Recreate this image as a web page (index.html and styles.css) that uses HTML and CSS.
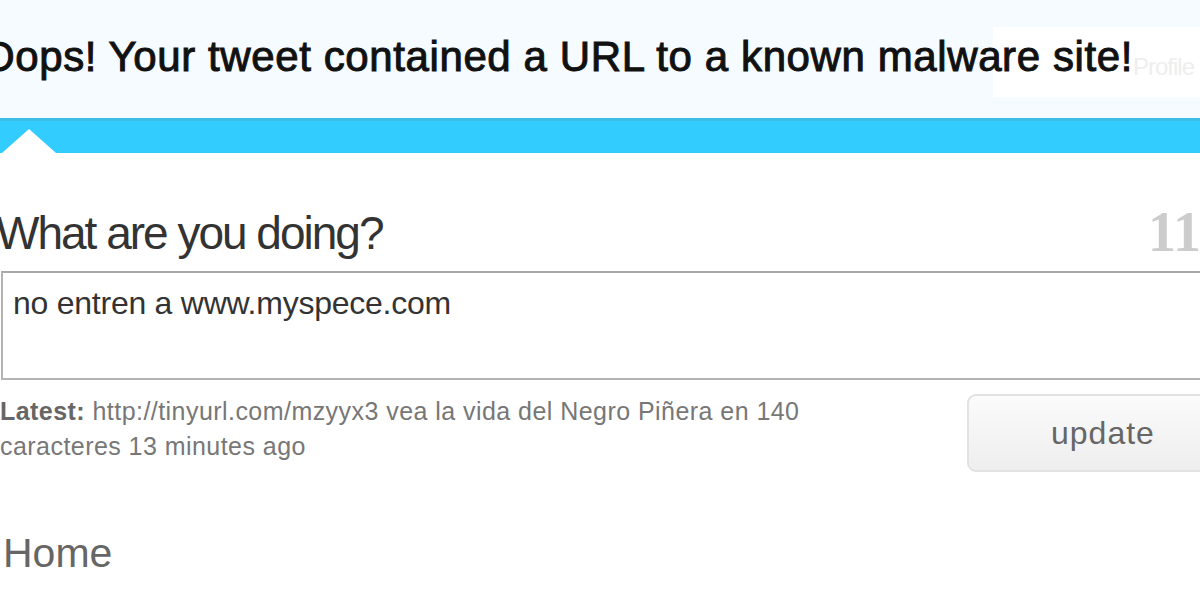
FILE: index.html
```html
<!DOCTYPE html>
<html lang="en">
<head>
	<meta charset="UTF-8">
	<title>Twitter - Home</title>
	<link rel="stylesheet" href="styles.css">
</head>
<body>
	<div id="header">
		<div class="nav"><a href="#">Profile</a></div>
		<h1 class="flash">Oops! Your tweet contained a URL to a known malware site!</h1>
	</div>
	<div class="tabbar"><span class="notch"></span></div>

	<div id="content">
		<form id="status-form" onsubmit="return false">
			<div class="doing">
				<label for="status">What are you doing?</label>
				<span class="counter">118</span>
			</div>
			<div class="status-box" id="status">no entren a www.myspece.com</div>
			<div class="bottom">
				<p class="latest"><b>Latest:</b> http://tinyurl.com/mzyyx3 vea la vida del Negro Piñera en 140 caracteres 13 minutes ago</p>
				<button type="submit" class="btn">update</button>
			</div>
		</form>
		<h2 class="home">Home</h2>
	</div>
</body>
</html>
```

FILE: styles.css
```css
body{
	margin: 0;
	background: #fff;
	font-family: "Liberation Sans", Arial, sans-serif;
	overflow: hidden;
}
#header{
	position: relative;
	height: 118px;
	background: #f5fbfe;
	overflow: hidden;
}
.flash{
	position: relative;
	margin: 0 0 0 -18px;
	padding-top: 33px;
	font-size: 42px;
	font-weight: normal;
	-webkit-text-stroke: 1px #111;
	color: #111;
	white-space: nowrap;
	letter-spacing: 0.6px;
}
.nav{
	position: absolute;
	left: 993px;
	top: 27px;
	width: 220px;
	height: 70px;
	background: #fff;
}
.nav a{
	display: block;
	padding: 26px 0 0 140px;
	font-size: 24px;
	color: #eee;
	text-decoration: none;
	letter-spacing: -1px;
}
.tabbar{
	position: relative;
	height: 32px;
	background: #33ccff;
	border-top: 3px solid #3bbde8;
}
.notch{
	position: absolute;
	left: 2px;
	bottom: 0;
	border-left: 27px solid transparent;
	border-right: 27px solid transparent;
	border-bottom: 24px solid #fff;
}
#content{
	padding-top: 44px;
}
.doing{
	display: flex;
	justify-content: space-between;
	align-items: flex-end;
	height: 56px;
}
.doing label{
	font-size: 46px;
	color: #333;
	letter-spacing: -2px;
	margin-left: -4px;
	margin-bottom: -3px;
	line-height: 1;
}
.counter{
	font-family: "Liberation Serif", Georgia, serif;
	font-weight: bold;
	font-size: 56px;
	color: #ccc;
	margin-right: -29px;
	margin-bottom: -7px;
	line-height: 1;
}
.status-box{
	margin-top: 18px;
	margin-left: 1px;
	width: 1220px;
	height: 109px;
	border: 2px solid #b4b4b4;
	border-right: none;
	border-top-color: #a8a8a8;
	padding: 12px 0 0 10px;
	font-size: 32px;
	color: #333;
	letter-spacing: -0.25px;
	box-sizing: border-box;
}
.bottom{
	display: flex;
	justify-content: space-between;
	margin-top: 14px;
}
.latest{
	margin: 0;
	width: 820px;
	font-size: 25px;
	line-height: 35px;
	color: #777;
	letter-spacing: 0.45px;
}
.latest b{
	color: #666;
}
.btn{
	width: 260px;
	height: 78px;
	margin-right: -27px;
	border: 2px solid #e2e2e2;
	border-radius: 9px;
	background: linear-gradient(#fbfbfb, #eeeeee);
	font-family: "Liberation Sans", Arial, sans-serif;
	font-size: 32px;
	color: #666;
	text-align: left;
	letter-spacing: 1px;
	padding: 0 0 0 82px;
}
.home{
	margin: 61px 0 0 3px;
	font-size: 41px;
	font-weight: normal;
	color: #666;
	line-height: 1;
}
```
